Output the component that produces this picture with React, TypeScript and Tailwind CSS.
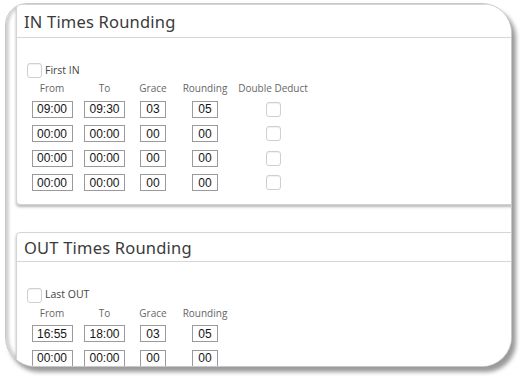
import React from "react";

const cols = ["w-[52px]", "w-[53px]", "w-[44px]", "w-[60px]", "w-[76px]"];

function Check() {
  return <div className="w-[15px] h-[15px] rounded-[3px] border border-[#cfcfcf] bg-white shadow-[inset_0_1px_1px_rgba(0,0,0,0.06)]" />;
}

function Inp({ v, w }: { v: string; w: string }) {
  return (
    <div
      className={`${w} h-[17px] border border-[#9a9a9a] bg-white flex items-center justify-center text-[12px] text-[#151515]`}
      style={{ fontFamily: "'Liberation Sans', Arial, sans-serif" }}
    >
      {v}
    </div>
  );
}

function Row({ vals, dd }: { vals: string[]; dd: boolean }) {
  return (
    <div className="flex items-center h-[17px]">
      <div className={`${cols[0]} flex justify-center`}><Inp v={vals[0]} w="w-[41px]" /></div>
      <div className={`${cols[1]} flex justify-center`}><Inp v={vals[1]} w="w-[41px]" /></div>
      <div className={`${cols[2]} flex justify-center`}><Inp v={vals[2]} w="w-[26px]" /></div>
      <div className={`${cols[3]} flex justify-center`}><Inp v={vals[3]} w="w-[26px]" /></div>
      {dd && <div className={`${cols[4]} flex justify-center`}><Check /></div>}
    </div>
  );
}

function Card({
  title,
  check,
  rows,
  dd,
  headerCls,
  bodyPt,
  className,
}: {
  title: string;
  check: string;
  rows: string[][];
  dd: boolean;
  headerCls: string;
  bodyPt: string;
  className: string;
}) {
  const heads = dd ? ["From", "To", "Grace", "Rounding", "Double Deduct"] : ["From", "To", "Grace", "Rounding"];
  return (
    <div className={`w-[540px] shrink-0 bg-white border border-[#d4d4d4] rounded-[4px] shadow-[0_2px_3px_rgba(0,0,0,0.28)] ${className}`}>
      <div
        className={`${headerCls} flex items-center pl-[7px] border-b border-[#d6d6d6] text-[16.5px] text-[#3a3a3a] tracking-[0.2px]`}
        style={{ fontFamily: "'Noto Sans', 'Open Sans', sans-serif" }}
      >
        {title}
      </div>
      <div className={`pl-[9px] ${bodyPt} pb-[13px]`} style={{ fontFamily: "'Open Sans', 'Noto Sans', sans-serif" }}>
        <div className="flex items-center gap-[3px] ml-[1px]">
          <Check />
          <span className="text-[10.5px] text-[#444]">{check}</span>
        </div>
        <div className="flex items-center h-[18px] mt-[1px] text-[10px] text-[#666]">
          {heads.map((h, i) => (
            <div key={h} className={`${cols[i]} text-center`}>{h}</div>
          ))}
        </div>
        <div className="flex flex-col gap-[7.5px] mt-[3px]">
          {rows.map((r, i) => (
            <Row key={i} vals={r} dd={dd} />
          ))}
        </div>
      </div>
    </div>
  );
}

export default function App() {
  return (
    <div className="w-[520px] h-[381px] bg-white pt-[3px] pl-[5px]">
      <div className="w-[507px] h-[364px] rounded-[30px] rounded-tl-[22px] border border-[#c8c8c8] bg-white overflow-hidden shadow-[4px_5px_4px_rgba(0,0,0,0.4),inset_3px_0_3px_rgba(0,0,0,0.18)] pl-[10px] flex flex-col">
        <Card
          title="IN Times Rounding"
          check="First IN"
          dd
          headerCls="h-[33px] pt-[2px]"
          bodyPt="pt-[25px]"
          className=""
          rows={[
            ["09:00", "09:30", "03", "05"],
            ["00:00", "00:00", "00", "00"],
            ["00:00", "00:00", "00", "00"],
            ["00:00", "00:00", "00", "00"],
          ]}
        />
        <Card
          title="OUT Times Rounding"
          check="Last OUT"
          dd={false}
          headerCls="h-[29px] pt-[3px]"
          bodyPt="pt-[25px]"
          className="mt-[27px]"
          rows={[
            ["16:55", "18:00", "03", "05"],
            ["00:00", "00:00", "00", "00"],
          ]}
        />
      </div>
    </div>
  );
}
